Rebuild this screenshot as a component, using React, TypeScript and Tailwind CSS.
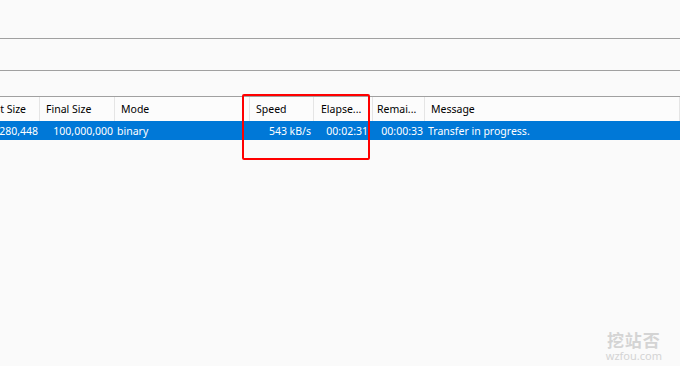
import React from "react";

const cols = [
  { w: 40, header: "Current Size", hpr: 13, value: "72,280,448", align: "right", vpr: 2 },
  { w: 75, header: "Final Size", hpl: 6, value: "100,000,000", align: "right", vpr: 2 },
  { w: 135, header: "Mode", hpl: 6, value: "binary", align: "left", vpl: 2 },
  { w: 64, header: "Speed", hpl: 6, value: "543 kB/s", align: "right", vpr: 3 },
  { w: 59, header: "Elapse...", hpl: 7, value: "00:02:31", align: "right", vpr: 5 },
  { w: 52, header: "Remai...", hpl: 4, value: "00:00:33", align: "right", vpr: 2 },
  { w: 255, header: "Message", hpl: 6, value: "Transfer in progress.", align: "left", vpl: 3 },
];

export default function App() {
  return (
    <div
      className="relative w-[680px] h-[366px] overflow-hidden bg-[#fafafa] text-[10.5px] text-black"
      style={{ fontFamily: '"Noto Sans", "Open Sans", sans-serif' }}
    >
      <div className="h-[38px]" />
      <div className="h-px bg-[#a0a0a0]" />
      <div className="h-[31px]" />
      <div className="h-px bg-[#a0a0a0]" />
      <div className="h-[25px]" />
      <div className="h-px bg-[#a0a0a0]" />
      {/* header */}
      <div className="flex h-[24px] bg-[#fcfcfc]">
        {cols.map((c, i) => (
          <div
            key={i}
            className={`flex items-center pt-[2px] overflow-hidden whitespace-nowrap border-r border-[#e5e5e5] ${c.hpr ? "justify-end" : "justify-start"}`}
            style={{ width: c.w, paddingLeft: c.hpl ?? 0, paddingRight: c.hpr ?? 0, flexShrink: 0 }}
          >
            {c.header}
          </div>
        ))}
      </div>
      {/* selected row */}
      <div className="flex h-[19px] bg-[#0078d7] text-white">
        {cols.map((c, i) => (
          <div
            key={i}
            className={`flex items-center pt-[3px] overflow-hidden whitespace-nowrap ${c.align === "right" ? "justify-end" : "justify-start"}`}
            style={{ width: c.w, paddingLeft: c.vpl ?? 0, paddingRight: c.vpr ?? 0, flexShrink: 0 }}
          >
            {c.value}
          </div>
        ))}
      </div>

      {/* red highlight box */}
      <div className="absolute left-[242px] top-[94px] w-[128px] h-[66px] border-2 border-[#ff0000] rounded-[2px]" />

      {/* watermark */}
      <div className="absolute right-[18px] bottom-[4px] flex flex-col items-center text-[#d4d4d4]">
        <span
          className="text-[17px] leading-[17px] font-bold tracking-[1px]"
          style={{ fontFamily: '"Noto Sans CJK SC", sans-serif' }}
        >
          挖站否
        </span>
        <span className="mt-[2px] text-[11px] leading-[12px]" style={{ fontFamily: '"Noto Sans", sans-serif' }}>
          wzfou.com
        </span>
      </div>
    </div>
  );
}
